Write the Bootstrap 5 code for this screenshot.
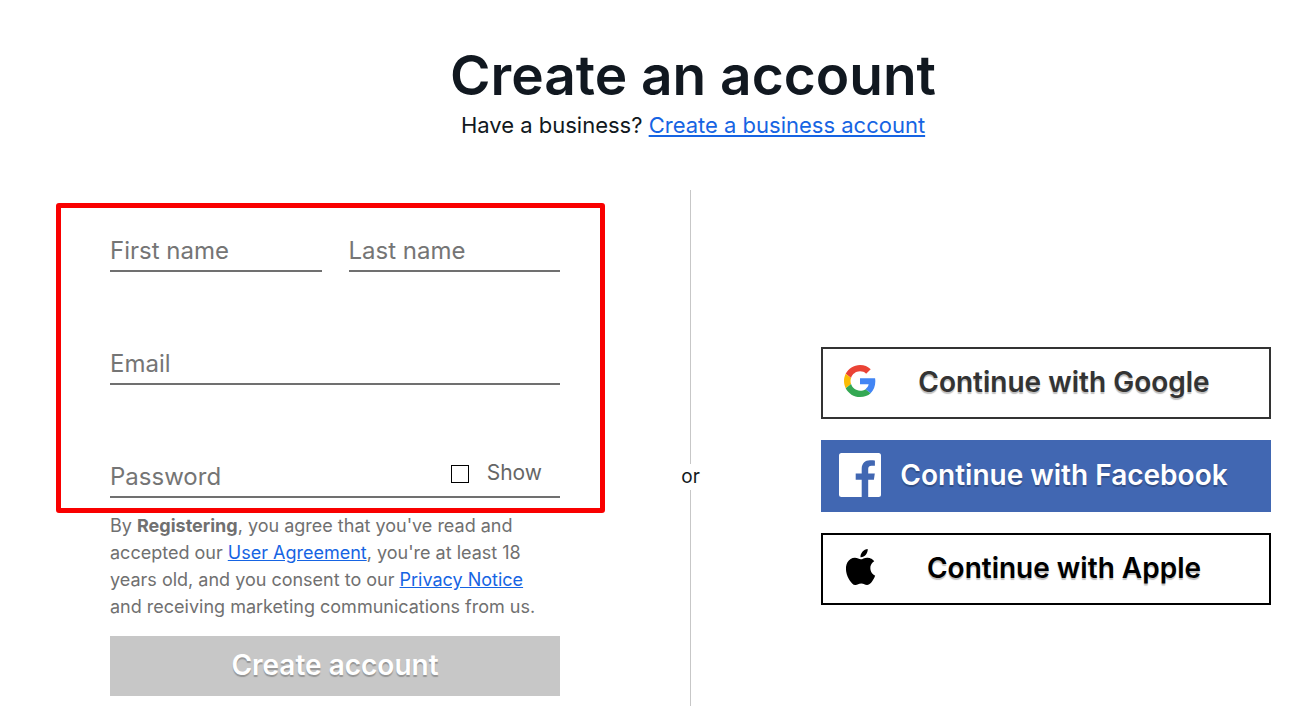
<!DOCTYPE html>
<html lang="en">
<head>
<meta charset="utf-8">
<meta name="viewport" content="width=device-width, initial-scale=1">
<title>Create an account</title>
<link href="https://cdn.jsdelivr.net/npm/bootstrap@5.3.0/dist/css/bootstrap.min.css" rel="stylesheet">
<style>
  body { font-family: Inter, "Liberation Sans", sans-serif; color: #111820; background: #fff; }
  a { color: #1664e3; }
  .page { padding: 41px 35px 0 110px; }
  .page-head { padding-left: 5px; }
  .page-title { font-size: 55px; line-height: 68px; font-weight: 600; }
  .page-sub { font-size: 22px; line-height: 32px; margin-bottom: 49px; }
  .form-side { padding-right: 130px; }
  .social-side { padding: 157px 0 24px 130px; }
  .fields { position: relative; padding-top: 38px; margin-bottom: 14px; }
  .fields::after { content: ""; position: absolute; inset: 13px -45px -15px -54px; border: 5px solid #f90000; border-radius: 3px; pointer-events: none; }
  .line-row { border-bottom: 2px solid #707070; }
  .line-input { font-size: 24px; line-height: 32px; height: 42px; padding: 2px 0 0; border: 0; border-radius: 0; background: transparent; }
  .line-input::placeholder { color: #757575; opacity: 1; }
  .stack { gap: 69px; }
  .names { gap: 27px; }
  .show-label { font-size: 21px; line-height: 32px; color: #666; gap: 18px; padding: 0 18px 4px 0; }
  .show-box { appearance: none; width: 18px; height: 18px; margin: 2px 0 0; border: 1px solid #000; background: #fff; border-radius: 0; }
  .show-box:checked { background: #111820; }
  .terms { font-size: 18px; line-height: 27px; color: #707070; max-width: 444px; margin-bottom: 16px; }
  .submit-btn, .submit-btn:disabled { height: 60px; font-size: 28px; font-weight: 600; color: #fff; background: #c7c7c7; border: 0; border-radius: 0; opacity: 1; padding: 0 0 2px; text-shadow: 0 2px 1px rgba(0,0,0,.25); }
  .divider { width: 1px; }
  .divider i { width: 1px; background: #c7c7c7; }
  .divider .upper { height: 274px; }
  .divider span { font-size: 19px; line-height: 26px; }
  .social-list { gap: 21px; }
  .social-btn { height: 72px; padding: 0 22px 2px 16px; border: 2px solid; border-radius: 0; font-size: 28px; font-weight: 600; text-shadow: 0 2px 1px rgba(0,0,0,.25); }
  .social-btn svg { width: 42px; height: 44px; flex: none; }
  .google { color: #333; border-color: #333; }
  .facebook, .facebook:hover { color: #fff; background: #4167b2; border-color: #4167b2; }
  .apple { color: #000; border-color: #000; }
</style>
</head>
<body>
<div class="page min-vh-100 d-flex flex-column">
  <header class="page-head text-center">
    <h1 class="page-title mb-0">Create an account</h1>
    <p class="page-sub">Have a business? <a href="#">Create a business account</a></p>
  </header>
  <main class="d-flex flex-grow-1">
    <form class="form-side col">
      <div class="fields d-flex flex-column stack">
        <div class="d-flex names">
          <div class="col line-row"><input class="form-control line-input" type="text" placeholder="First name" aria-label="First name"></div>
          <div class="col line-row"><input class="form-control line-input" type="text" placeholder="Last name" aria-label="Last name"></div>
        </div>
        <div class="line-row"><input class="form-control line-input" type="email" placeholder="Email" aria-label="Email"></div>
        <div class="line-row d-flex align-items-center">
          <input class="form-control line-input flex-grow-1" type="password" placeholder="Password" aria-label="Password">
          <label class="show-label d-flex align-items-center"><input class="show-box" type="checkbox">Show</label>
        </div>
      </div>
      <p class="terms">By <b>Registering</b>, you agree that you've read and accepted our <a href="#">User Agreement</a>, you're at least 18 years old, and you consent to our <a href="#">Privacy Notice</a> and receiving marketing communications from us.</p>
      <button class="btn submit-btn w-100" type="submit" disabled>Create account</button>
    </form>
    <div class="divider d-flex flex-column align-items-center">
      <i class="upper"></i>
      <span>or</span>
      <i class="flex-grow-1"></i>
    </div>
    <div class="social-side col">
      <div class="social-list d-grid">
        <button class="btn social-btn google d-flex align-items-center" type="button">
          <svg viewBox="0 0 42 44" aria-hidden="true"><g transform="translate(5 5) scale(.667)">
            <path fill="#ea4335" d="M24 9.500c3.540 0 6.710 1.220 9.210 3.600l6.850-6.850C35.900 2.380 30.470 0 24 0 14.620 0 6.510 5.380 2.560 13.220l7.980 6.190C12.430 13.720 17.740 9.500 24 9.500z"/>
            <path fill="#4285f4" d="M46.980 24.550c0-1.570-.150-3.090-.380-4.550H24v9.020h12.940c-.580 2.960-2.260 5.480-4.780 7.180l7.730 6c4.510-4.180 7.090-10.360 7.090-17.650z"/>
            <path fill="#fbbc05" d="M10.530 28.590c-.480-1.450-.760-2.990-.760-4.590s.270-3.140.760-4.590l-7.980-6.190C.920 16.460 0 20.120 0 24c0 3.880.920 7.540 2.560 10.780l7.970-6.190z"/>
            <path fill="#34a853" d="M24 48c6.480 0 11.930-2.130 15.890-5.810l-7.730-6c-2.150 1.450-4.920 2.300-8.160 2.300-6.260 0-11.570-4.220-13.470-9.910l-7.980 6.190C6.510 42.620 14.620 48 24 48z"/>
          </g></svg>
          <span class="flex-grow-1">Continue with Google</span>
        </button>
        <button class="btn social-btn facebook d-flex align-items-center" type="button">
          <svg viewBox="0 0 42 44" aria-hidden="true">
            <rect width="42" height="44" rx="2.500" fill="#fff"/>
            <path fill="#4167b2" d="M22.700 44V26.700h-6v-6.200h6v-4.700c0-5.600 3.300-8.600 8.300-8.600 2.300 0 4.200.2 4.900.3v5.300h-3.300c-2.700 0-3.400 1.400-3.400 3.300v4.400h6.600l-.9 6.200h-5.700V44z"/>
          </svg>
          <span class="flex-grow-1">Continue with Facebook</span>
        </button>
        <button class="btn social-btn apple d-flex align-items-center" type="button">
          <svg viewBox="0 0 42 44" aria-hidden="true"><g transform="translate(0 -.6) scale(1.800)">
            <path d="M18.710 19.500c-.830 1.240-1.710 2.450-3.050 2.470-1.340.030-1.770-.790-3.290-.790-1.530 0-2 .770-3.270.820-1.310.050-2.300-1.320-3.140-2.530C4.250 17 2.940 12.450 4.700 9.390c.870-1.520 2.430-2.480 4.120-2.510 1.280-.020 2.500.870 3.290.870.780 0 2.260-1.070 3.810-.910.650.030 2.470.260 3.640 1.980-.090.060-2.170 1.280-2.150 3.810.030 3.020 2.650 4.030 2.680 4.040-.030.070-.420 1.440-1.380 2.830M13 3.500c.730-.830 1.940-1.460 2.940-1.500.130 1.170-.340 2.350-1.040 3.190-.690.850-1.830 1.510-2.950 1.420-.150-1.150.410-2.350 1.050-3.110z"/>
          </g></svg>
          <span class="flex-grow-1">Continue with Apple</span>
        </button>
      </div>
    </div>
  </main>
</div>
<script src="https://cdn.jsdelivr.net/npm/bootstrap@5.3.0/dist/js/bootstrap.bundle.min.js"></script>
</body>
</html>
